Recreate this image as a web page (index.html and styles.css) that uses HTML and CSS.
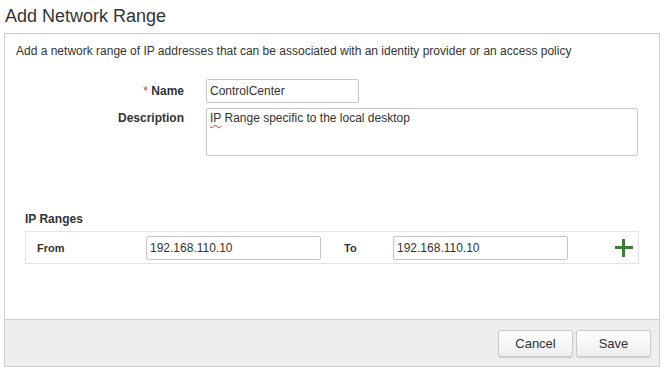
FILE: index.html
```html
<!DOCTYPE html>
<html>
<head>
<meta charset="utf-8">
<title>Add Network Range</title>
<link rel="stylesheet" href="styles.css">
</head>
<body>
<h1 class="title">Add Network Range</h1>
<div class="panel">
  <div class="content">
    <p class="intro">Add a network range of IP addresses that can be associated with an identity provider or an access policy</p>
    <div class="form">
      <label class="label name-label"><span class="req">*</span> Name</label>
      <div class="field"><input class="input name-input" type="text" value="ControlCenter"></div>
      <label class="label desc-label">Description</label>
      <div class="field"><div class="textarea"><span class="spell">IP</span> Range specific to the local desktop</div></div>
    </div>
    <h2 class="ranges-title">IP Ranges</h2>
    <div class="ranges">
      <span class="rlabel from">From</span>
      <input class="input ip" type="text" value="192.168.110.10">
      <span class="rlabel to">To</span>
      <input class="input ip" type="text" value="192.168.110.10">
      <span class="plus" aria-label="Add range"></span>
    </div>
  </div>
  <div class="footer">
    <button class="btn">Cancel</button>
    <button class="btn">Save</button>
  </div>
</div>
</body>
</html>
```
FILE: styles.css
```css
* { box-sizing: border-box; }
html, body { margin: 0; padding: 0; background: #fff; }
body {
  font-family: "Liberation Sans", Arial, sans-serif;
  color: #333;
  font-size: 12px;
}
.title {
  margin: 0;
  height: 33px;
  padding: 5px 0 0 5px;
  font-size: 18px;
  line-height: 22px;
  font-weight: normal;
  color: #333;
}
.panel {
  margin: 0 4px;
  height: 334px;
  border: 1px solid #cccccc;
  display: flex;
  flex-direction: column;
}
.content {
  flex: 1;
  padding: 10px 0 0 0;
}
.intro {
  margin: 0 0 0 11px;
  line-height: 14px;
  font-size: 12px;
}
.form {
  margin-top: 21px;
  display: grid;
  grid-template-columns: 179px 1fr;
  column-gap: 22px;
  row-gap: 5px;
}
.label {
  text-align: right;
  font-weight: bold;
  font-size: 12px;
}
.name-label { line-height: 24px; }
.desc-label { line-height: 14px; padding-top: 3px; }
.req { color: #d9302c; font-weight: normal; }
.input {
  font-family: "Liberation Sans", Arial, sans-serif;
  font-size: 12px;
  color: #333;
  height: 24px;
  border: 1px solid #c6c6c6;
  border-radius: 2px;
  padding: 0 3px;
  outline: none;
  background: #fff;
}
.name-input { width: 153px; }
.textarea {
  width: 432px;
  height: 48px;
  border: 1px solid #c6c6c6;
  border-radius: 2px;
  padding: 2px 3px;
  line-height: 14px;
  font-size: 12px;
}
.spell {
  text-decoration: underline wavy #e0312b;
  text-decoration-thickness: 1px;
  text-underline-offset: 2px;
}
.ranges-title {
  margin: 56px 0 0 20px;
  font-size: 12px;
  line-height: 14px;
  font-weight: bold;
}
.ranges {
  margin: 5px 0 0 20px;
  width: 614px;
  height: 33px;
  border: 1px solid #e3e3e3;
  display: flex;
  align-items: center;
  padding-left: 11px;
}
.rlabel { font-weight: bold; font-size: 11px; }
.from { width: 109px; }
.to { width: 49px; margin-left: 23px; }
.ip { width: 175px; }
.plus {
  position: relative;
  width: 18px;
  height: 18px;
  margin-left: 47px;
  display: inline-block;
}
.plus::before, .plus::after {
  content: "";
  position: absolute;
  background: #3e7a3b;
}
.plus::before { left: 0; top: 7px; width: 18px; height: 3px; }
.plus::after { left: 7px; top: 0; width: 3px; height: 18px; }
.footer {
  height: 47px;
  background: #eeeeee;
  border-top: 1px solid #d2d2d2;
  display: flex;
  justify-content: flex-end;
  align-items: flex-start;
  padding: 10px 8px 0 0;
  gap: 3px;
}
.btn {
  width: 75px;
  height: 27px;
  font-family: "Liberation Sans", Arial, sans-serif;
  font-size: 13px;
  color: #333;
  background: linear-gradient(#ffffff, #eeeeee);
  border: 1px solid #c9c9c9;
  border-radius: 3px;
  box-shadow: 0 1px 1px rgba(0,0,0,0.12);
  padding: 0;
}
```
